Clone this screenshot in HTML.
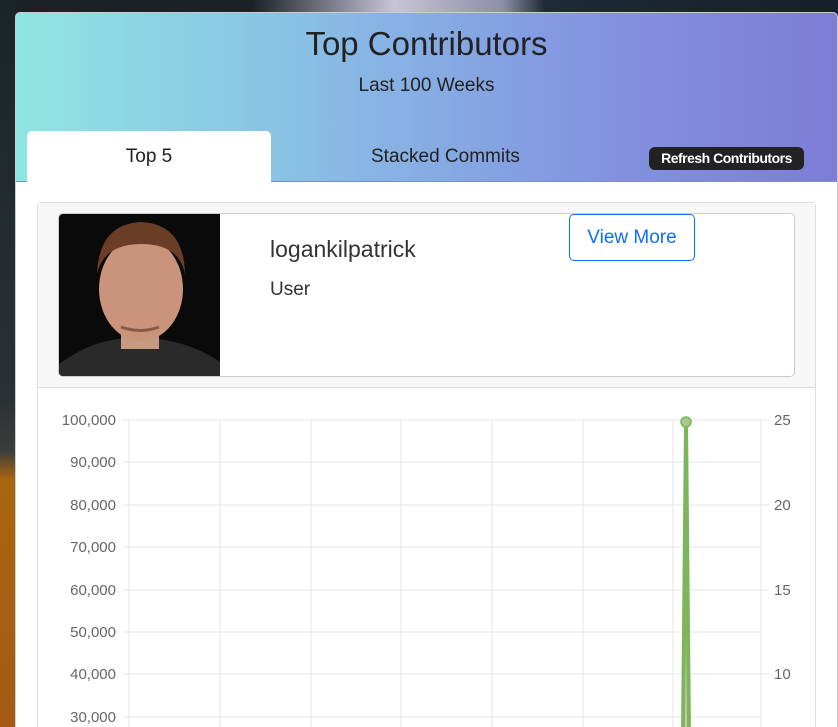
<!DOCTYPE html>
<html><head><meta charset="utf-8"><style>
html,body{margin:0;width:838px;height:727px;overflow:hidden}
body{position:relative;font-family:"Liberation Sans",sans-serif;background:#1a2124}
.bgl{position:absolute;left:0;top:0;width:16px;height:727px;background:linear-gradient(#1b2528 0,#2a3134 55%,#3b3d3a 62%,#a8660f 66%,#a65a14 100%)}
.bgt{position:absolute;left:0;top:0;width:838px;height:13px;background:linear-gradient(90deg,#1a2226 0,#1a2226 30%,#c8c4d8 47%,#8c8fa8 60%,#1e2a38 65%,#16202a 100%)}
.card{position:absolute;left:15px;top:12px;width:821px;height:720px;background:#fff;border-radius:5px 5px 0 0;overflow:hidden;border:1px solid #ccc}
.hdr{height:168px;background:linear-gradient(90deg,#8fe6e1 0,#89bfe5 35%,#8394e0 70%,#7d7cd6 100%);position:relative;border-bottom:1px solid #7b8dc7}
h1{margin:0;position:absolute;top:12px;width:100%;text-align:center;font-weight:400;font-size:33px;color:#222}
.sub{position:absolute;top:62px;width:100%;text-align:center;font-size:19px;color:#222}
.tab{position:absolute;left:11px;top:118px;width:244px;height:51px;background:#fff;border-radius:5px 5px 0 0;text-align:center;line-height:52px;font-size:19px;color:#222}
.tab2{position:absolute;left:355px;top:133px;font-size:19px;color:#222}
.btn{position:absolute;left:633px;top:134px;width:155px;height:23px;background:#222;color:#fff;border-radius:6px;font-weight:bold;font-size:14px;text-align:center;line-height:23px;letter-spacing:-0.5px}
.inner{position:absolute;left:21px;top:189px;width:777px;height:540px;border:1px solid #ddd;border-radius:4px;background:#fff}
.ih{height:184px;background:#f7f7f7;border-bottom:1px solid #ddd;position:relative}
.prof{position:absolute;left:20px;top:10px;width:735px;height:162px;background:#fff;border:1px solid #ccc;border-radius:5px;overflow:hidden}
.name{position:absolute;left:211px;top:22px;font-size:23px;color:#333}
.user{position:absolute;left:211px;top:65px;font-size:19px;color:#333}
.vm{position:absolute;left:510px;top:0;width:126px;height:47px;border:1px solid #0d6efd;border-radius:5px;color:#0d6efd;font-size:19px;text-align:center;line-height:45px;box-sizing:border-box}
</style></head><body>
<div class="bgt"></div><div class="bgl"></div>
<div class="card">
<div class="hdr">
<h1>Top Contributors</h1>
<div class="sub">Last 100 Weeks</div>
<div class="tab">Top 5</div>
<div class="tab2">Stacked Commits</div>
<div class="btn">Refresh Contributors</div>
</div>
<div class="inner">
<div class="ih">
<div class="prof">
<svg width="161" height="162" style="position:absolute;left:0;top:0">
<rect width="161" height="162" fill="#0a0a0a"/>
<path d="M0 150 Q30 128 60 125 L100 125 Q135 130 161 148 L161 162 L0 162Z" fill="#2a2a2a"/>
<rect x="62" y="95" width="38" height="40" fill="#c79a84"/>
<ellipse cx="82" cy="75" rx="42" ry="52" fill="#c9937c"/>
<path d="M38 60 Q40 10 82 8 Q125 10 126 60 Q120 30 82 30 Q45 30 38 60Z" fill="#6a3d26"/>
<path d="M62 113 Q82 120 100 113" stroke="#8a5a48" stroke-width="3" fill="none"/>
</svg>
<div class="name">logankilpatrick</div>
<div class="user">User</div>
<div class="vm">View More</div>
</div>
</div>
<svg width="777" height="360" style="position:absolute;left:0;top:174px;font-family:'Liberation Sans',sans-serif;font-size:15px" >
<g stroke="#e5e5e5" stroke-width="1">
<line x1="91" y1="43" x2="91" y2="360"/><line x1="182" y1="43" x2="182" y2="360"/><line x1="273" y1="43" x2="273" y2="360"/><line x1="363" y1="43" x2="363" y2="360"/><line x1="454" y1="43" x2="454" y2="360"/><line x1="545" y1="43" x2="545" y2="360"/><line x1="635" y1="43" x2="635" y2="360"/><line x1="723" y1="43" x2="723" y2="360"/>
<line x1="85" y1="43" x2="731" y2="43"/><line x1="85" y1="85" x2="723" y2="85"/><line x1="85" y1="128" x2="731" y2="128"/><line x1="85" y1="170" x2="723" y2="170"/><line x1="85" y1="213" x2="731" y2="213"/><line x1="85" y1="255" x2="723" y2="255"/><line x1="85" y1="297" x2="731" y2="297"/><line x1="85" y1="340" x2="723" y2="340"/>
</g>
<g fill="#666" text-anchor="end">
<text x="78" y="48">100,000</text><text x="78" y="90">90,000</text><text x="78" y="133">80,000</text><text x="78" y="175">70,000</text><text x="78" y="218">60,000</text><text x="78" y="260">50,000</text><text x="78" y="302">40,000</text><text x="78" y="345">30,000</text>
</g>
<g fill="#666"><text x="736" y="48">25</text><text x="736" y="133">20</text><text x="736" y="218">15</text><text x="736" y="302">10</text></g>
<path d="M645 360 L648 45 L651 360" stroke="#7db55a" stroke-width="4" fill="#d8cfc0"/>
<circle cx="648" cy="45" r="5" fill="#a8c890" stroke="#7db55a" stroke-width="1.5"/>
</svg>
</div>
</div>
</body></html>
